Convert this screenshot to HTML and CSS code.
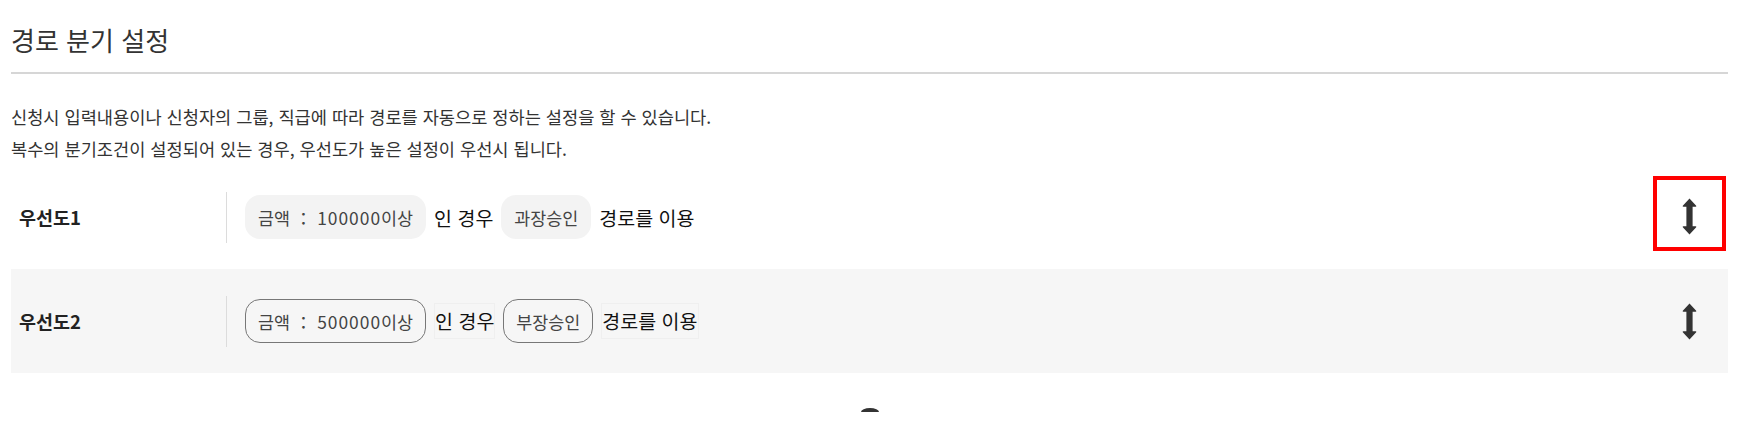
FILE: index.html
```html
<!DOCTYPE html>
<html lang="ko">
<head>
<meta charset="utf-8">
<title>경로 분기 설정</title>
<link rel="stylesheet" href="styles.css">
</head>
<body>
<div class="page">
  <div class="header">
    <h1 class="title">경로 분기 설정</h1>
  </div>
  <div class="desc">
    <p>신청시 입력내용이나 신청자의 그룹, 직급에 따라 경로를 자동으로 정하는 설정을 할 수 있습니다.</p>
    <p>복수의 분기조건이 설정되어 있는 경우, 우선도가 높은 설정이 우선시 됩니다.</p>
  </div>
  <div class="rows">
    <div class="row">
      <div class="label">우선도1</div>
      <div class="divider"></div>
      <div class="cond">
        <span class="chip">금액 ： <span class="num">100000</span>이상</span>
        <span class="word">인 경우</span>
        <span class="chip">과장승인</span>
        <span class="word">경로를 이용</span>
      </div>
      <div class="handle selected">
        <svg class="arrow" viewBox="0 0 15 37" width="15" height="37"><path d="M7.5 0.6 L14.2 7.8 Q14.7 8.8 13.6 8.8 L10.6 8.8 L10.6 28.2 L13.6 28.2 Q14.7 28.2 14.2 29.2 L7.5 36.4 L0.8 29.2 Q0.3 28.2 1.4 28.2 L4.4 28.2 L4.4 8.8 L1.4 8.8 Q0.3 8.8 0.8 7.8 Z" fill="#333"/></svg>
      </div>
    </div>
    <div class="row alt">
      <div class="label">우선도2</div>
      <div class="divider"></div>
      <div class="cond">
        <span class="chip outline">금액 ： <span class="num">500000</span>이상</span>
        <span class="word boxed">인 경우</span>
        <span class="chip outline">부장승인</span>
        <span class="word boxed">경로를 이용</span>
      </div>
      <div class="handle">
        <svg class="arrow" viewBox="0 0 15 37" width="15" height="37"><path d="M7.5 0.6 L14.2 7.8 Q14.7 8.8 13.6 8.8 L10.6 8.8 L10.6 28.2 L13.6 28.2 Q14.7 28.2 14.2 29.2 L7.5 36.4 L0.8 29.2 Q0.3 28.2 1.4 28.2 L4.4 28.2 L4.4 8.8 L1.4 8.8 Q0.3 8.8 0.8 7.8 Z" fill="#333"/></svg>
      </div>
    </div>
  </div>
  <div class="add-wrap"><div class="add-btn"></div></div>
</div>
</body>
</html>
```
FILE: styles.css
```css
html, body {
  margin: 0;
  padding: 0;
  background: #fff;
}
body {
  font-family: "Noto Sans CJK KR", "Noto Sans", sans-serif;
  color: #222;
}
.page {
  padding: 0 14px 0 11px;
}
.header {
  padding-top: 23px;
  padding-bottom: 15px;
  border-bottom: 2px solid #d6d6d6;
}
.title {
  margin: 0;
  font-size: 26px;
  line-height: 34px;
  font-weight: 400;
  color: #333;
}
.desc {
  margin-top: 27px;
}
.desc p {
  margin: 0;
  font-size: 17.6px;
  line-height: 32px;
  color: #333;
}
.row {
  display: flex;
  align-items: center;
  height: 104px;
}
.row.alt {
  background: #f6f6f6;
}
.label {
  width: 207px;
  padding-left: 8px;
  font-size: 18.5px;
  font-weight: 700;
  color: #222;
}
.divider {
  width: 1px;
  height: 51px;
  background: #dcdcdc;
}
.cond {
  display: flex;
  align-items: center;
  margin-left: 18px;
  gap: 8px;
}
.chip {
  display: inline-flex;
  align-items: center;
  height: 44px;
  padding: 0 13px;
  border-radius: 15px;
  background: #f3f3f3;
  font-size: 17.4px;
  color: #444;
  box-sizing: border-box;
  white-space: pre;
}
.chip .num {
  letter-spacing: 1px;
}
.chip.outline {
  background: transparent;
  border: 1px solid #777;
  padding: 0 12px;
}
.word {
  font-size: 19.5px;
  color: #111;
  white-space: pre;
}
.word.boxed {
  border: 1px solid #efefef;
  line-height: 34px;
}
.handle {
  margin-left: auto;
  margin-right: 2px;
  width: 73px;
  height: 75px;
  box-sizing: border-box;
  display: flex;
  align-items: center;
  justify-content: center;
}
.handle.selected {
  border: 4px solid #f00;
  margin-bottom: 8px;
  padding-top: 6px;
}
.arrow {
  display: block;
}
.add-wrap {
  display: flex;
  justify-content: center;
  padding-top: 35px;
}
.add-btn {
  width: 18px;
  height: 4px;
  border-radius: 9px 9px 0 0 / 4px 4px 0 0;
  background: #333;
}
```
